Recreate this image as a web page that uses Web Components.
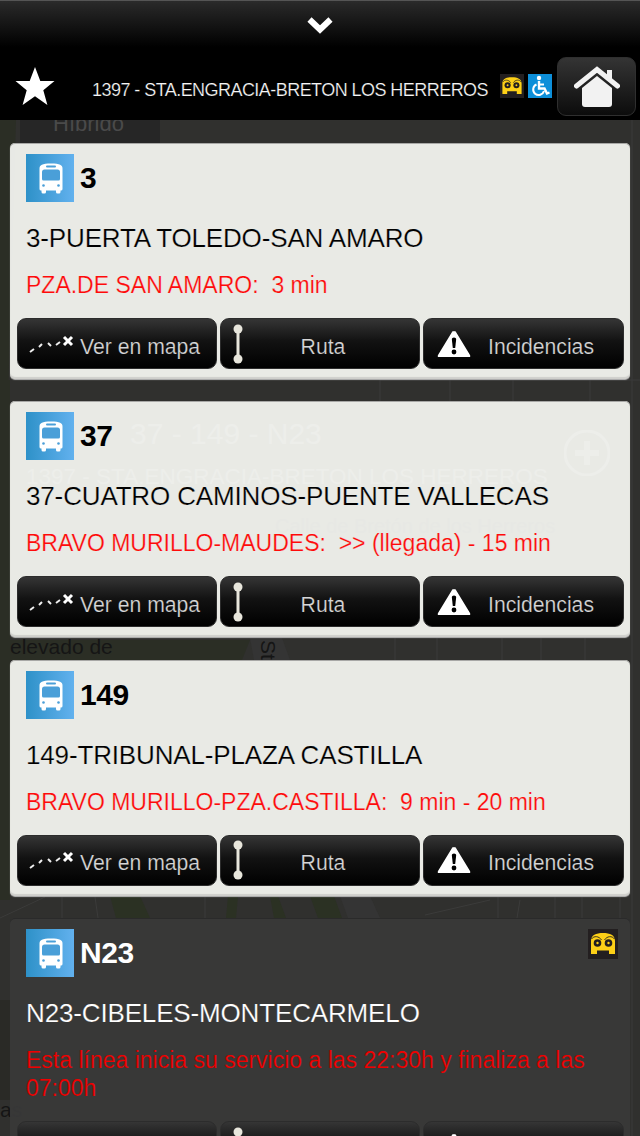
<!DOCTYPE html>
<html lang="es">
<head>
<meta charset="utf-8">
<title>Parada 1397</title>
<style>
  html, body { margin: 0; padding: 0; background: #2e2e2e; }
  body { font-family: "Liberation Sans", Arial, sans-serif; }
</style>
</head>
<body>
<bus-stop-page>
  <map-backdrop slot="map"></map-backdrop>
  <stop-header slot="header" stop="1397 - STA.ENGRACIA-BRETON LOS HERREROS"></stop-header>
  <line-card line="3" route="3-PUERTA TOLEDO-SAN AMARO" info="PZA.DE SAN AMARO:  3 min"></line-card>
  <line-card line="37" route="37-CUATRO CAMINOS-PUENTE VALLECAS" info="BRAVO MURILLO-MAUDES:  &gt;&gt; (llegada) - 15 min"></line-card>
  <line-card line="149" route="149-TRIBUNAL-PLAZA CASTILLA" info="BRAVO MURILLO-PZA.CASTILLA:  9 min - 20 min"></line-card>
  <line-card dark night line="N23" route="N23-CIBELES-MONTECARMELO" info="Esta línea inicia su servicio a las 22:30h y finaliza a las 07:00h"></line-card>
</bus-stop-page>

<script>
// shared svg bits
const NIGHT_ICON = `
  <svg viewBox="0 0 30 30" width="100%" height="100%" style="display:block">
    <rect width="30" height="30" fill="#231f20"/>
    <path d="M3 25V12C3 6 8 4 15 4s12 2 12 8v13h-6v-3.500H9V25z" fill="#fdd017"/>
    <path d="M3.500 10C6 6.500 11 7 13.500 11M26.500 10C24 6.500 19 7 16.500 11" fill="none" stroke="#231f20" stroke-width=".9"/>
    <circle cx="9.500" cy="14" r="3.800" fill="#231f20"/><circle cx="9.500" cy="14" r="1.200" fill="#fdd017"/>
    <circle cx="20.500" cy="14" r="3.800" fill="#231f20"/><circle cx="20.500" cy="14" r="1.200" fill="#fdd017"/>
  </svg>`;

const BUS_ICON = `
  <svg viewBox="0 0 48 48" width="48" height="48" style="display:block">
    <defs>
      <linearGradient id="b" x1="0" x2="1" y1="0" y2="0"><stop offset="0" stop-color="#2e91c8"/><stop offset="1" stop-color="#62b1ee"/></linearGradient>
    </defs>
    <rect width="48" height="48" fill="url(#b)"/>
    <path d="M13.500 35V14.500C13.500 11 16 9.500 25 9.500s11.500 1.500 11.500 5V35q0 1.500-1.500 1.500h-.5V38q0 1.500-1.500 1.500h-1.500Q30 39.500 30 38v-1.500H20V38q0 1.500-1.500 1.500H17q-1.500 0-1.500-1.500v-1.500H15q-1.500 0-1.500-1.500z" fill="#fff"/>
    <path d="M16 18q0-2.500 2.500-2.500h13Q34 15.500 34 18v7q0 1.500-1.500 1.500h-15Q16 26.500 16 25z" fill="#4a9fd8"/>
    <rect x="20" y="11.500" width="10" height="2" rx="1" fill="#4a9fd8"/>
    <circle cx="17.500" cy="31.500" r="1.300" fill="#4a9fd8"/><circle cx="32.500" cy="31.500" r="1.300" fill="#4a9fd8"/>
  </svg>`;

class StopHeader extends HTMLElement {
  connectedCallback() {
    const root = this.attachShadow({ mode: 'open' });
    root.innerHTML = `
      <style>
        :host { display: block; height: 120px; background: #000; color: #f5f5f5; }
        .pull {
          height: 55px; display: flex; justify-content: center; align-items: flex-start; padding-top: 15px; box-sizing: border-box;
          background: linear-gradient(#2b2b2b, #262626 8%, #000 46px);
          border-top: 1px solid #555;
        }
        .row { height: 65px; display: flex; align-items: flex-start; }
        .star { width: 40px; height: 40px; margin: 11px 37px 0 15px; flex: none; }
        /* text-stroke in the background colour thins the face to a light weight */
        .name { font-size: 18px; letter-spacing: -.55px; line-height: 20px; margin-top: 25px; width: 408px; flex: none; white-space: nowrap; -webkit-text-stroke: .2px #000; }
        .badge { width: 24px; height: 24px; margin: 19px 4px 0 0; flex: none; }
        .chair { background: #0d8fd9; margin-right: 5px; }
        .home {
          width: 79px; height: 59px; box-sizing: border-box; margin: 2px 0 0 0; border-radius: 9px; flex: none;
          border: 1px solid #2f2f2f; background: linear-gradient(#343434, #0c0c0c);
          display: flex; align-items: center; justify-content: center;
        }
      </style>
      <div class="pull">
        <svg width="28" height="19" viewBox="0 0 28 19"><path d="M3.500 3.500 14 13.500 24.500 3.500" fill="none" stroke="#fff" stroke-width="6"/></svg>
      </div>
      <div class="row">
        <svg class="star" viewBox="0 0 40 40"><path d="M20 1l5.300 13.900H39.500L28.300 24.300 32.400 39 20 30.300 7.600 39l4.100-14.700L.5 14.900h14.200z" fill="#fff"/></svg>
        <span class="name">${this.getAttribute('stop')}</span>
        <div class="badge">${NIGHT_ICON}</div>
        <div class="badge chair">
          <svg viewBox="0 0 24 24" width="24" height="24" style="display:block"><circle cx="11" cy="4" r="2.200" fill="#fff"/><path d="M11 7v7.500h5.500l2.500 5 2.500-1" fill="none" stroke="#fff" stroke-width="2.400"/><path d="M11 10.500h5" stroke="#fff" stroke-width="2"/><path d="M8.500 10.500a5.500 5.500 0 1 0 7.500 6.500" fill="none" stroke="#fff" stroke-width="2"/></svg>
        </div>
        <div class="home">
          <svg width="46" height="41" viewBox="0 0 46 41"><path d="M2.500 20 23 3.500 43.500 20" fill="none" stroke="#f2f2f2" stroke-width="5" stroke-linecap="round"/><path d="M33 4h5v11l-5-4z" fill="#f2f2f2"/><path d="M8 22 23 10l15 12v16q0 3-3 3H11q-3 0-3-3z" fill="#f2f2f2"/></svg>
        </div>
      </div>`;
  }
}
customElements.define('stop-header', StopHeader);

class ActionButton extends HTMLElement {
  connectedCallback() {
    const root = this.attachShadow({ mode: 'open' });
    root.innerHTML = `
      <style>
        :host {
          display: flex; align-items: center; box-sizing: border-box; height: 51px; border-radius: 9px;
          border: 1px solid #2c2c2c; background: linear-gradient(#353535, #121212 45%, #000);
          color: #d6d6d6; font-size: 21.200px; white-space: nowrap; overflow: hidden; -webkit-text-stroke: .2px #0c0c0c;
        }
        .icon { display: flex; flex: none; }
        .label { flex: 1; position: relative; top: 3px; }
      </style>
      <span class="icon"><slot name="icon"></slot></span>
      <span class="label"><slot></slot></span>`;
  }
}
customElements.define('action-button', ActionButton);

class LineCard extends HTMLElement {
  connectedCallback() {
    const dark = this.hasAttribute('dark');
    // the last card runs off the bottom of the screen, its labels never show
    const label = text => this.hasAttribute('night') ? '' : text;
    const bg = dark ? '#373737' : '#e8e9e5';
    const root = this.attachShadow({ mode: 'open' });
    root.innerHTML = `
      <style>
        :host {
          display: block; box-sizing: border-box; margin: 0 10px 22.400px; padding: 11px 6px 10px 7px; border-radius: 5px;
          position: relative; color: ${dark ? '#fff' : '#000'};
          background: ${dark ? 'rgba(56,56,56,.96)' : 'rgba(240,241,237,.96)'};
          box-shadow: ${dark ? 'inset 0 1px 0 #2a2a2a' : 'inset 0 1px 0 #a8a8a6, inset 0 -2px 1px #cfcfcb, 0 1px 1px #bbb'};
        }
        .head { display: flex; align-items: center; gap: 6px; padding-left: 9px; height: 48px; }
        .num { font-weight: 700; font-size: 30px; letter-spacing: -.4px; }
        .route { font-size: 26px; letter-spacing: -.15px; line-height: 30px; margin: 21px 0 0 9px; white-space: nowrap; -webkit-text-stroke: .2px ${bg}; }
        .info { font-size: 23px; line-height: 28px; margin: 18px 0 19px 9px; color: ${dark ? '#f00000' : '#ff0a0a'}; white-space: pre-wrap; -webkit-text-stroke: .2px ${bg}; }
        .buttons { display: grid; grid-template-columns: 200px 200px 201px; gap: 3px; }
        .ghost { position: absolute; right: 12px; top: 11px; width: 30px; height: 30px; }
      </style>
      <div class="head">${BUS_ICON}<span class="num">${this.getAttribute('line')}</span></div>
      <div class="route">${this.getAttribute('route')}</div>
      <div class="info">${this.getAttribute('info')}</div>
      ${this.hasAttribute('night') ? `<div class="ghost">${NIGHT_ICON}</div>` : ''}
      <div class="buttons">
        <action-button>
          <svg slot="icon" style="margin:0 5px 0 11px;display:block" width="46" height="20" viewBox="0 0 46 20"><path d="M1 18l4-3M10 13l3-3M19 9l3 3M27 11l4-3" stroke="#eee" stroke-width="2" fill="none"/><path d="M35 3l8 8M43 3l-8 8" stroke="#fff" stroke-width="3"/></svg>
          ${label('Ver en mapa')}
        </action-button>
        <action-button>
          <svg slot="icon" style="margin-left:11px;display:block" width="12" height="42" viewBox="0 0 12 42"><circle cx="6" cy="6" r="4.500" fill="#e8e6dc"/><circle cx="6" cy="36" r="4.500" fill="#e8e6dc"/><rect x="4.500" y="8" width="3" height="26" fill="#e8e6dc"/></svg>
          <span style="display:block;text-align:center;padding-right:17px">${label('Ruta')}</span>
        </action-button>
        <action-button>
          <svg slot="icon" style="margin:0 17px 0 13px;display:block" width="34" height="28" viewBox="0 0 34 28"><path d="M17 1.500q1-1 2 .5L33 25q1 2-1 2H2q-2 0-1-2L15 2q1-1.500 2-.5z" fill="#fff"/><path d="M14.800 9q0-1.500 2.200-1.500T19.200 9L18.200 18h-2.400z" fill="#000"/><circle cx="17" cy="22" r="2.400" fill="#000"/></svg>
          ${label('Incidencias')}
        </action-button>
      </div>`;
  }
}
customElements.define('line-card', LineCard);

// the dimmed map and info panel that sit behind the list
class MapBackdrop extends HTMLElement {
  connectedCallback() {
    const root = this.attachShadow({ mode: 'open' });
    root.innerHTML = `
      <style>
        :host { position: absolute; inset: 0; display: block; overflow: hidden; background: #30302e; }
        svg { position: absolute; inset: 0; }
        span { position: absolute; white-space: nowrap; }
        .tab { position: absolute; left: 20px; top: 100px; width: 140px; height: 44px; background: #262626; }
        .tab span { left: 33px; top: 11px; font-size: 22px; color: #4a4a4a; }
        .dark { color: #151515; font-size: 21px; }
        .ghost { color: #fff; opacity: .5; }
      </style>
      <svg width="640" height="1136" viewBox="0 0 640 1136">
        <!-- parks -->
        <path d="M0 120h16L8 400H0zM0 380h10v260H0zM0 640h250l-8 20H0z" fill="#2b2e25"/>
        <path d="M0 660h10v240H0z" fill="#2b2e25"/>
        <path d="M110 896h30l10 22h-34zM228 896h10l-2 22h-10zM270 896h8l8 22h-12zM310 896h24l8 22h-24z" fill="#2b3123"/>
        <path d="M0 1000h10v100H0z" fill="#2a2a26"/>
        <!-- roads -->
        <path d="M250 638h32l8 22h-36zM340 896h30l10 22h-32z" fill="#343434"/>
        <path d="M632 120v1016M395 638v22M437 638v22M502 638v22M541 638v22M585 638v22M0 918L45 897M62 897v21M95 897l3 21M205 897v21M425 915l65-15M498 897v21M520 900l-3 18M555 897v21M582 897v21M620 897v21M380 380h260M380 379v22M450 379v22M513 379v22M590 379v22" stroke="#3b3b3a" stroke-width="1" fill="none"/>
      </svg>
      <div class="tab"><span>Híbrido</span></div>
      <span class="ghost" style="left:130px;top:417px;font-size:30px">37 - 149 - N23</span>
      <span class="ghost" style="left:26px;top:464px;font-size:22.500px">1397 - STA.ENGRACIA-BRETON LOS HERREROS</span>
      <span style="left:275px;top:515px;font-size:20px;color:#000">Calle de Bretón de los Herreros</span>
      <svg width="46" height="46" viewBox="0 0 46 46" style="left:564px;top:430px;opacity:.5"><circle cx="23" cy="23" r="22" fill="none" stroke="#fff" stroke-width="3"/><path d="M23 11v24M11 23h24" stroke="#fff" stroke-width="6"/></svg>
      <span class="dark" style="left:10px;top:635px">elevado de</span>
      <span class="dark" style="left:280px;top:640px;transform:rotate(90deg);transform-origin:left top">St</span>
      <span class="dark" style="left:0;top:1098px">as</span>`;
  }
}
customElements.define('map-backdrop', MapBackdrop);

class BusStopPage extends HTMLElement {
  connectedCallback() {
    const root = this.attachShadow({ mode: 'open' });
    root.innerHTML = `
      <style>
        :host { display: block; position: relative; width: 640px; height: 1136px; overflow: hidden; }
        .front { position: relative; }
        .list { padding-top: 23px; }
      </style>
      <slot name="map"></slot>
      <div class="front">
        <slot name="header"></slot>
        <div class="list"><slot></slot></div>
      </div>`;
  }
}
customElements.define('bus-stop-page', BusStopPage);
</script>
</body>
</html>
